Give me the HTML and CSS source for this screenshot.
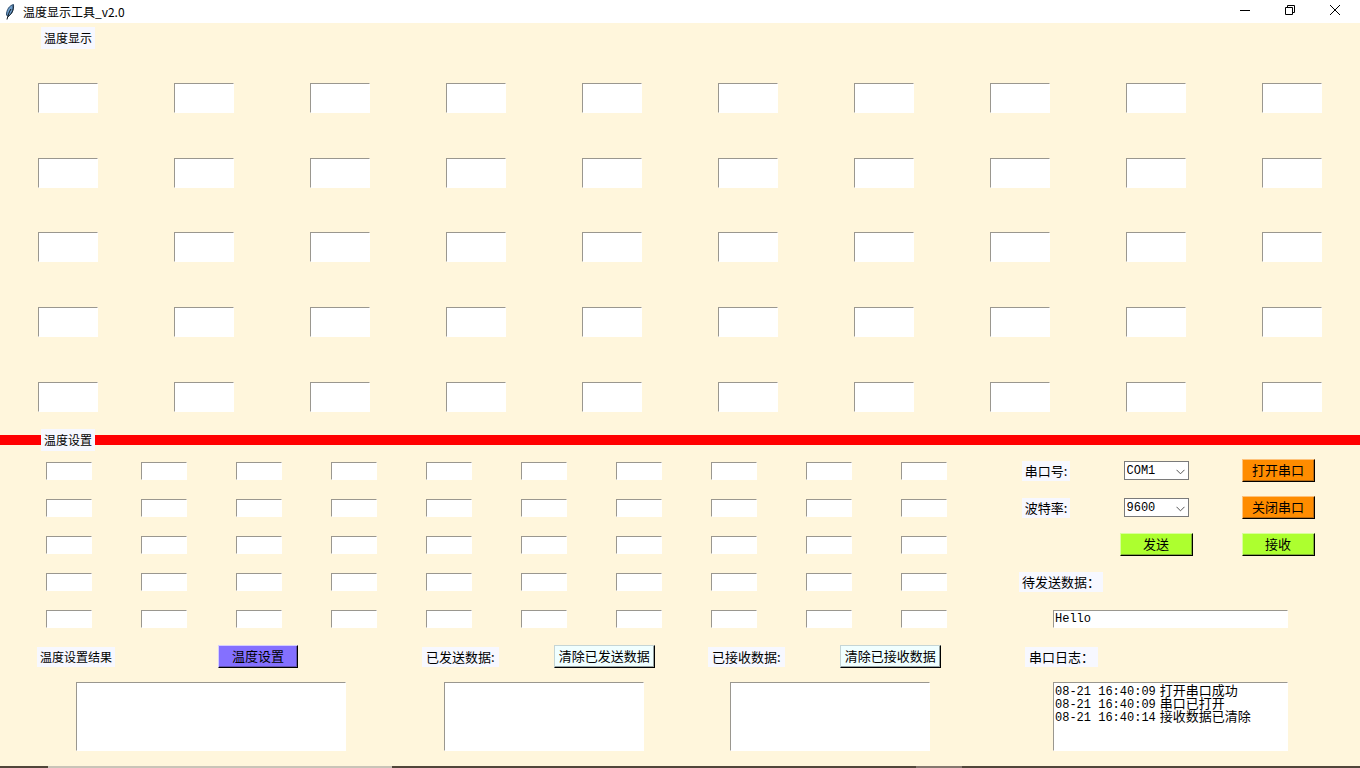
FILE: index.html
```html
<!DOCTYPE html>
<html lang="zh-CN">
<head>
<meta charset="utf-8">
<meta name="viewport" content="width=device-width, initial-scale=1">
<title>温度显示工具_v2.0</title>
<link rel="stylesheet" href="styles.css">
</head>
<body>
<div class="app">
  <header class="titlebar">
    <svg class="app-icon" viewBox="0 0 12 18" aria-hidden="true">
      <path d="M9.500 1.500C5.500 2.500 2.500 6.500 2.500 12L4 13.500C7.500 11.500 10 7 9.500 1.500Z" fill="#6d9cc9" stroke="#2b4a6b" stroke-width="1"/>
      <path d="M9 2.500C10 7 7.500 11.500 4 13.500" fill="none" stroke="#14222f" stroke-width="1"/>
      <path d="M7 6C5 9 4 12 3 16.500" fill="none" stroke="#10161c" stroke-width="1"/>
    </svg>
    <h1 class="app-title">温度显示工具_v2.0</h1>
    <div class="window-controls">
      <button class="window-button" type="button" aria-label="最小化"><svg viewBox="0 0 12 12"><path d="M1 6.500H11"/></svg></button>
      <button class="window-button" type="button" aria-label="还原"><svg viewBox="0 0 12 12"><path d="M1.500 3.500H8.500V10.500H1.500ZM3.500 3.500V1.500H10.500V8.500H8.500"/></svg></button>
      <button class="window-button" type="button" aria-label="关闭"><svg viewBox="0 0 12 12"><path d="M1 1L11 11M11 1L1 11"/></svg></button>
    </div>
  </header>

  <section class="display" aria-labelledby="display-title">
    <h2 class="tag section-title" id="display-title">温度显示</h2>
    <div class="cells display-cells" data-label="温度"></div>
  </section>

  <div class="divider"><h2 class="tag section-title" id="settings-title">温度设置</h2></div>

  <section class="settings" aria-labelledby="settings-title">
    <div class="cells setting-cells" data-label="设置温度"></div>

    <div class="serial">
      <label class="tag song" for="port">串口号:</label>
      <span class="picker">
        <select id="port"><option>COM1</option></select>
        <svg class="chevron" viewBox="0 0 9 6" aria-hidden="true"><path d="M0.500 0.800L4.500 4.800L8.500 0.800"/></svg>
      </span>
      <button class="button orange" type="button">打开串口</button>

      <label class="tag song" for="baud">波特率:</label>
      <span class="picker">
        <select id="baud"><option>9600</option></select>
        <svg class="chevron" viewBox="0 0 9 6" aria-hidden="true"><path d="M0.500 0.800L4.500 4.800L8.500 0.800"/></svg>
      </span>
      <button class="button orange" type="button">关闭串口</button>

      <button class="button green send" type="button">发送</button>
      <button class="button green" type="button">接收</button>

      <label class="tag song pending-label" for="pending">待发送数据：</label>
      <input class="sunken pending" id="pending" type="text" value="Hello">
    </div>

    <div class="group result">
      <div class="group-head">
        <label class="tag" for="result">温度设置结果</label>
        <button class="button violet" type="button">温度设置</button>
      </div>
      <textarea class="sunken output" id="result"></textarea>
    </div>
    <div class="group">
      <div class="group-head">
        <label class="tag song" for="sent">已发送数据:</label>
        <button class="button azure" type="button">清除已发送数据</button>
      </div>
      <textarea class="sunken output" id="sent"></textarea>
    </div>
    <div class="group">
      <div class="group-head">
        <label class="tag song" for="received">已接收数据:</label>
        <button class="button azure" type="button">清除已接收数据</button>
      </div>
      <textarea class="sunken output" id="received"></textarea>
    </div>
    <div class="group log-group">
      <div class="group-head"><h3 class="tag song" id="log-title">串口日志：</h3></div>
      <div class="sunken output log" role="log" aria-labelledby="log-title">
        <p><time>08-21 16:40:09</time>打开串口成功</p>
        <p><time>08-21 16:40:09</time>串口已打开</p>
        <p><time>08-21 16:40:14</time>接收数据已清除</p>
      </div>
    </div>
  </section>

  <div class="taskbar"><span class="task-light"></span><span class="task-active"></span></div>
</div>
<script src="cells.js"></script>
</body>
</html>
```
FILE: styles.css
```css
* { box-sizing: border-box; }

body {
  margin: 0;
  background: #fff6dc;
  color: #000;
  font: 12px/20px "Noto Sans CJK SC", sans-serif;
}

h1, h2, h3, p { margin: 0; font-size: inherit; font-weight: 400; }
button, input, select, textarea { margin: 0; font: inherit; color: inherit; border-radius: 0; }

.app {
  min-height: 100vh;
  display: grid;
  grid-template-columns: minmax(0, 1fr);
  grid-template-rows: 23px 412fr 10px 321fr 2px;
}

.titlebar { display: flex; align-items: center; background: #fff; padding-left: 4px; }
.app-icon { width: 12px; height: 18px; margin-right: 7px; }
.window-controls { display: flex; margin-left: auto; align-self: stretch; padding-right: 3px; }
.window-button {
  width: 45px;
  padding: 0 0 3px;
  border: 0;
  background: none;
  display: flex;
  align-items: center;
  justify-content: center;
}
.window-button svg { width: 12px; height: 12px; fill: none; stroke: #000; stroke-width: 1; }

.tag { background: #f7f8ff; padding: 0 3px; line-height: 20px; white-space: nowrap; }
.song { font-family: "Noto Sans CJK SC", sans-serif; font-size: 13px; }
.section-title { width: max-content; margin-left: 41px; line-height: 22px; }

.display { display: flex; flex-direction: column; padding: 4px 0 1px; gap: 12px; }
.cells { display: grid; grid-template: repeat(5, 1fr) / repeat(10, 1fr); place-items: center; }
.display-cells { flex: 1; }

.sunken {
  background: #fff;
  border: 1px solid #fff;
  border-top-color: #9a978f;
  border-left-color: #9a978f;
  outline: 0;
}
.display-cells input { width: 60px; height: 30px; }
.setting-cells input { width: 46px; height: 18px; }

.divider { display: flex; align-items: center; background: #f00; }

.settings {
  display: grid;
  grid-template-columns: 422fr 286fr 264fr 388fr;
  grid-template-rows: 1fr auto;
  padding: 7px 0 15px;
}
.setting-cells { grid-column: 1 / 4; padding-left: 21px; }

.serial {
  display: grid;
  grid-template: repeat(5, 1fr) / 110fr 110fr 134fr;
  place-items: center;
  padding: 0 15px 0 19px;
}
.send { grid-column: 2; }
.pending-label { grid-column: 1 / 4; justify-self: start; margin-left: 28px; }
.pending {
  grid-column: 1 / 4;
  justify-self: start;
  margin-left: 62px;
  width: 235px;
  height: 18px;
  padding: 0 1px;
  font: 12px/16px "Liberation Mono", monospace;
}

.picker { position: relative; display: flex; }
.picker select {
  appearance: none;
  width: 65px;
  height: 19px;
  padding: 0 16px 0 2px;
  border: 1px solid #7a7a7a;
  background: #fff;
  font: 12px/16px "Liberation Mono", monospace;
}
.chevron {
  position: absolute;
  right: 4px;
  top: 8px;
  width: 9px;
  height: 6px;
  fill: none;
  stroke: #555;
  pointer-events: none;
}

.button {
  min-width: 73px;
  height: 23px;
  padding: 0 4px 1px;
  border: 1px solid #fff;
  border-right-color: #000;
  border-bottom-color: #000;
  font-size: 13px;
  line-height: 18px;
  white-space: nowrap;
}
.orange { background: #ff8c00; border-top-color: #ffc27a; border-left-color: #ffc27a; box-shadow: inset -1px -1px #b86a10; }
.green { background: #adff2f; border-top-color: #d8ff9a; border-left-color: #d8ff9a; box-shadow: inset -1px -1px #7fae35; }
.violet { background: #8470ff; border-top-color: #d5ceff; border-left-color: #d5ceff; box-shadow: inset -1px -1px #6253b0; min-width: 80px; }
.azure { background: #f0ffff; border-top-color: #c5d5d5; border-left-color: #c5d5d5; box-shadow: inset -1px -1px #96a3a3; }

.group { min-width: 0; }
.group-head { display: flex; align-items: center; height: 37px; gap: 55px; }
.group-head .song { padding: 0 4px; }
.output { display: block; width: 200px; height: 69px; margin: 7px 0 0 22px; resize: none; }
.result { padding-left: 37px; }
.result .group-head { gap: 103px; }
.result .output { width: 270px; margin-left: 39px; }
.log-group .group-head { padding-left: 53px; }
.log-group .output { width: 235px; margin-left: 81px; }
.log { padding: 0 1px; font-size: 13px; line-height: 13px; white-space: nowrap; overflow: hidden; }
.log p { display: flex; align-items: baseline; gap: 4px; height: 13px; }
.log time { font: 12px/13px "Liberation Mono", monospace; }

.taskbar { display: grid; grid-template-columns: 48fr 344fr 524fr 46fr 398fr; background: #51463a; }
.task-light { grid-column: 2; background: #c9c4b8; }
.task-active { grid-column: 4; background: #85786f; }
```
FILE: cells.js
```js
document.querySelectorAll(".cells").forEach(function (grid) {
  for (let i = 1; i <= 50; i++) {
    const input = document.createElement("input");
    input.type = "text";
    input.className = "sunken";
    input.setAttribute("aria-label", grid.dataset.label + " " + i);
    grid.appendChild(input);
  }
});
```
